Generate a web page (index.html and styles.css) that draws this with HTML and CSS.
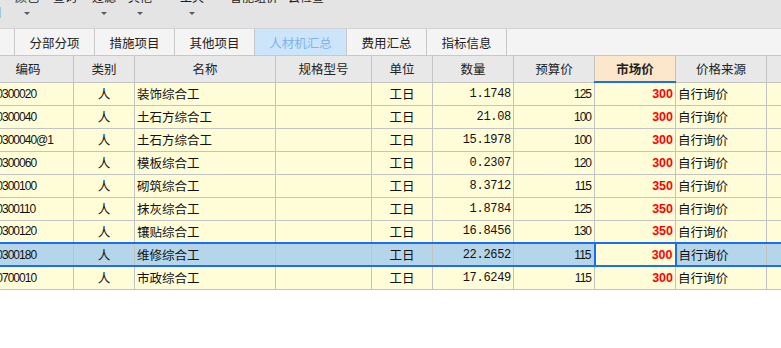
FILE: index.html
```html
<!DOCTYPE html>
<html lang="zh-CN">
<head>
    <meta charset="UTF-8">
    <title>人材机汇总</title>
    <link rel="stylesheet" href="styles.css">
</head>
<body>
    <div class="toolbar">
        <div class="tool-cut">目</div>
        <div class="tool"><span class="tool-label">颜色</span><span class="tool-arrow"></span></div>
        <div class="tool"><span class="tool-label">查询</span></div>
        <div class="tool"><span class="tool-label">过滤</span><span class="tool-arrow"></span></div>
        <div class="tool"><span class="tool-label">其他</span><span class="tool-arrow"></span></div>
        <div class="tool"><span class="tool-label">工具</span><span class="tool-arrow"></span></div>
        <div class="tool"><span class="tool-label">智能组价</span></div>
        <div class="tool"><span class="tool-label">云检查</span></div>
    </div>

    <div class="tabs">
        <div class="tab-spacer"></div>
        <div class="tab">分部分项</div>
        <div class="tab">措施项目</div>
        <div class="tab">其他项目</div>
        <div class="tab active">人材机汇总</div>
        <div class="tab">费用汇总</div>
        <div class="tab">指标信息</div>
    </div>

    <table class="grid">
        <colgroup>
            <col class="c-code">
            <col class="c-type">
            <col class="c-name">
            <col class="c-spec">
            <col class="c-unit">
            <col class="c-qty">
            <col class="c-budget">
            <col class="c-market">
            <col class="c-source">
            <col class="c-more">
        </colgroup>
        <thead>
            <tr>
                <th>编码</th>
                <th>类别</th>
                <th>名称</th>
                <th>规格型号</th>
                <th>单位</th>
                <th>数量</th>
                <th>预算价</th>
                <th class="market-head">市场价</th>
                <th>价格来源</th>
                <th></th>
            </tr>
        </thead>
        <tbody>
            <tr>
                <td class="code">000300020</td><td class="center">人</td><td>装饰综合工</td><td></td>
                <td class="center">工日</td><td class="qty">1.1748</td><td class="num">125</td>
                <td class="price">300</td><td>自行询价</td><td></td>
            </tr>
            <tr>
                <td class="code">000300040</td><td class="center">人</td><td>土石方综合工</td><td></td>
                <td class="center">工日</td><td class="qty">21.08</td><td class="num">100</td>
                <td class="price">300</td><td>自行询价</td><td></td>
            </tr>
            <tr>
                <td class="code">000300040@1</td><td class="center">人</td><td>土石方综合工</td><td></td>
                <td class="center">工日</td><td class="qty">15.1978</td><td class="num">100</td>
                <td class="price">300</td><td>自行询价</td><td></td>
            </tr>
            <tr>
                <td class="code">000300060</td><td class="center">人</td><td>模板综合工</td><td></td>
                <td class="center">工日</td><td class="qty">0.2307</td><td class="num">120</td>
                <td class="price">300</td><td>自行询价</td><td></td>
            </tr>
            <tr>
                <td class="code">000300100</td><td class="center">人</td><td>砌筑综合工</td><td></td>
                <td class="center">工日</td><td class="qty">8.3712</td><td class="num">115</td>
                <td class="price">350</td><td>自行询价</td><td></td>
            </tr>
            <tr>
                <td class="code">000300110</td><td class="center">人</td><td>抹灰综合工</td><td></td>
                <td class="center">工日</td><td class="qty">1.8784</td><td class="num">125</td>
                <td class="price">350</td><td>自行询价</td><td></td>
            </tr>
            <tr>
                <td class="code">000300120</td><td class="center">人</td><td>镶贴综合工</td><td></td>
                <td class="center">工日</td><td class="qty">16.8456</td><td class="num">130</td>
                <td class="price">350</td><td>自行询价</td><td></td>
            </tr>
            <tr class="selected">
                <td class="code">000300180</td><td class="center">人</td><td>维修综合工</td><td></td>
                <td class="center">工日</td><td class="qty">22.2652</td><td class="num">115</td>
                <td class="price current">300</td><td>自行询价</td><td></td>
            </tr>
            <tr>
                <td class="code">000700010</td><td class="center">人</td><td>市政综合工</td><td></td>
                <td class="center">工日</td><td class="qty">17.6249</td><td class="num">115</td>
                <td class="price">300</td><td>自行询价</td><td></td>
            </tr>
        </tbody>
    </table>
</body>
</html>
```

FILE: styles.css
```css
* {
    margin: 0;
    padding: 0;
    box-sizing: border-box;
}

body {
    font-family: "Noto Sans CJK SC", "Liberation Sans", sans-serif;
    font-size: 12px;
    color: #1a1a1a;
    background: #ffffff;
    width: 781px;
    height: 348px;
    overflow: hidden;
}

/* toolbar, only the lower part is visible */
.toolbar {
    height: 29px;
    background: #e4e4e4;
    border-bottom: 1px solid #d4d4d4;
    display: grid;
    grid-template-columns: 7px 40px 36px 42px 30px 74px 50px 54px;
    overflow: hidden;
}

.tool-cut {
    margin-left: -10px;
    margin-top: 5px;
    line-height: 14px;
    font-size: 12px;
}

.tool {
    display: flex;
    flex-direction: column;
    align-items: center;
}

.tool-label {
    margin-top: -11px;
    line-height: 15px;
    white-space: nowrap;
}

.tool-arrow {
    margin-top: 8px;
    width: 0;
    height: 0;
    border-left: 3px solid transparent;
    border-right: 3px solid transparent;
    border-top: 3px solid #5a5a5a;
}

/* page tabs */
.tabs {
    height: 27px;
    background: #f4f4f4;
    border-bottom: 1px solid #c8c8c8;
    display: flex;
}

.tab-spacer {
    width: 15px;
    border-right: 1px solid #c8c8c8;
}

.tab {
    width: 80px;
    border-right: 1px solid #c8c8c8;
    display: flex;
    align-items: center;
    justify-content: center;
    color: #222;
    font-size: 12.5px;
}

.tab.active {
    width: 92px;
    background: #cce5fb;
    color: #80b4ee;
}

/* data grid */
.grid {
    margin-left: -18px;
    border-collapse: collapse;
    table-layout: fixed;
    width: 844px;
}

.c-code { width: 91px; }
.c-type { width: 61px; }
.c-name { width: 141px; }
.c-spec { width: 96px; }
.c-unit { width: 61px; }
.c-qty { width: 81px; }
.c-budget { width: 81px; }
.c-market { width: 81px; }
.c-source { width: 91px; }
.c-more { width: 60px; }

.grid th {
    height: 26px;
    background: #e8e8e8;
    border: 1px solid #c3c3c3;
    border-top: none;
    font-weight: normal;
    font-size: 12.5px;
    color: #222;
    text-align: center;
    white-space: nowrap;
    overflow: hidden;
}

.grid th.market-head {
    background: #fde7cc;
    font-weight: bold;
    border-bottom: 2px solid #1a6ef0;
}

.grid td {
    height: 23px;
    background: #fffcd8;
    border: 1px solid #c3c3c3;
    padding: 0 2px;
    font-size: 12.5px;
    color: #111;
    white-space: nowrap;
    overflow: hidden;
}

.grid td.code {
    font-family: "Liberation Sans", sans-serif;
    font-size: 12px;
    letter-spacing: -1px;
}

.grid td.center {
    text-align: center;
}

.grid td.qty {
    text-align: right;
    font-family: "Liberation Mono", monospace;
    font-size: 12px;
    letter-spacing: -0.3px;
}

.grid td.num {
    text-align: right;
    font-family: "Liberation Sans", sans-serif;
    font-size: 12px;
    letter-spacing: -1px;
    padding-right: 3px;
}

.grid td.price {
    text-align: right;
    font-family: "Liberation Sans", sans-serif;
    font-weight: bold;
    color: #ff0000;
}

.grid tr.selected td {
    background: #b4d5ea;
    border-top: 2px solid #1a6ef0;
    border-bottom: 2px solid #1a6ef0;
}

.grid tr.selected td.current {
    background: #fffcd8;
    border: 2px solid #1a6ef0;
}
```
